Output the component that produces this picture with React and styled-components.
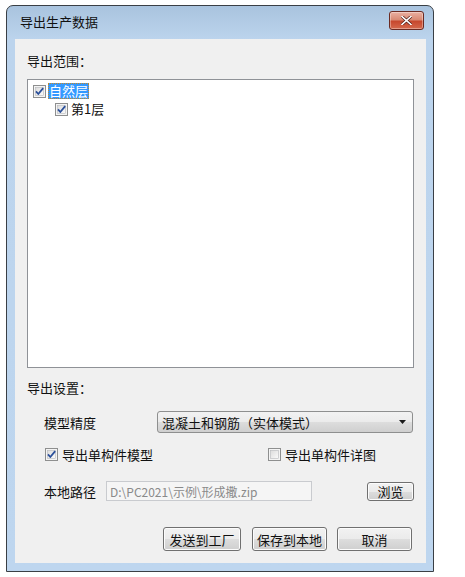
import React from 'react';
import styled, { createGlobalStyle } from 'styled-components';

const GlobalStyle = createGlobalStyle`
  body {
    margin: 0;
    background: #ffffff;
    font-family: "Noto Sans CJK SC", "Liberation Sans", sans-serif;
  }
`;

const Window = styled.div`
  box-sizing: border-box;
  width: 428px;
  height: 567px;
  margin: 5px 0 0 6px;
  border: 1px solid #3a3f45;
  border-radius: 7px 7px 0 0;
  background: linear-gradient(to bottom, #a9c3de 0px, #bcd4ed 34px, #bed6ef 100%);
  display: flex;
  flex-direction: column;
`;

const TitleBar = styled.div`
  height: 33px;
  display: flex;
  align-items: center;
  justify-content: space-between;
  padding: 0 9px 0 13px;
`;

const Title = styled.span`
  font-size: 13px;
  color: #111111;
  margin-top: -2px;
`;

const CloseButton = styled.div`
  box-sizing: border-box;
  width: 35px;
  height: 19px;
  margin-top: -5px;
  border: 1px solid #6b2a22;
  border-radius: 3px;
  background: linear-gradient(to bottom, #eab0a2 0%, #d98a74 45%, #c7482e 55%, #d5694d 100%);
  display: flex;
  align-items: center;
  justify-content: center;
  box-shadow: inset 0 0 0 1px rgba(255, 255, 255, 0.35);
`;

const Client = styled.div`
  flex: 1;
  margin: 0 7px 8px 8px;
  background: #f0f0f0;
  padding: 13px 12px 0 12px;
  display: flex;
  flex-direction: column;
  font-size: 13px;
  color: #111111;
`;

const SectionLabel = styled.div`
  height: 18px;
  line-height: 18px;
  margin-top: ${(p) => p.$top || 0}px;
`;

const TreeBox = styled.div`
  box-sizing: border-box;
  height: 289px;
  margin-top: 9px;
  background: #ffffff;
  border: 1px solid #8f9297;
  padding: 2px 0 0 5px;
`;

const TreeRow = styled.div`
  display: flex;
  align-items: center;
  height: 18px;
  padding-left: ${(p) => p.$indent || 0}px;
`;

const TreeText = styled.span`
  margin-left: 2px;
  padding: 0 1px;
  height: 16px;
  line-height: 15px;
  box-sizing: border-box;
  ${(p) =>
    p.$selected &&
    `
    background: #3399ff;
    color: #ffffff;
    outline: 1px dotted #c58a2a;
    outline-offset: -1px;
  `}
`;

const FormRow = styled.div`
  display: flex;
  align-items: center;
  height: ${(p) => p.$height || 18}px;
  margin-top: ${(p) => p.$top || 0}px;
  padding-left: ${(p) => p.$indent || 0}px;
`;

const FieldLabel = styled.span`
  width: ${(p) => p.$width}px;
  flex-shrink: 0;
`;

const Select = styled.div`
  box-sizing: border-box;
  width: 256px;
  height: 22px;
  border: 1px solid #8e8f8f;
  border-radius: 3px;
  background: linear-gradient(to bottom, #f2f2f2 0%, #ebebeb 50%, #dddddd 51%, #cfcfcf 100%);
  display: flex;
  align-items: center;
  justify-content: space-between;
  padding: 0 6px 0 4px;
`;

const CheckItem = styled.label`
  display: flex;
  align-items: center;
  width: ${(p) => p.$width || 'auto'};
`;

const CheckText = styled.span`
  margin-left: 4px;
`;

const PathInput = styled.div`
  box-sizing: border-box;
  width: 206px;
  height: 20px;
  border: 1px solid #c9cbcf;
  background: #f5f5f5;
  color: #8a8a8a;
  font-size: 12px;
  display: flex;
  align-items: center;
  padding-left: 3px;
`;

const Button = styled.div`
  box-sizing: border-box;
  width: ${(p) => p.$width}px;
  height: ${(p) => p.$height || 24}px;
  margin-left: ${(p) => p.$left || 0}px;
  border: 1px solid #707070;
  border-radius: 3px;
  background: linear-gradient(to bottom, #f2f2f2 0%, #ebebeb 50%, #dddddd 51%, #cfcfcf 100%);
  box-shadow: inset 0 0 0 1px #fcfcfc;
  display: flex;
  align-items: center;
  justify-content: center;
  font-size: 13px;
  color: #111111;
`;

const ButtonBar = styled.div`
  display: flex;
  justify-content: flex-end;
  margin-top: 26px;
  padding-right: 2px;
`;

const Spacer = styled.div`
  flex: 1;
`;

const CheckBox = ({ checked }) => (
  <svg width="13" height="13" viewBox="0 0 13 13">
    <defs>
      <linearGradient id="cbfill" x1="0" y1="0" x2="1" y2="1">
        <stop offset="0" stopColor="#dcdcdc" />
        <stop offset="1" stopColor="#fbfbfb" />
      </linearGradient>
    </defs>
    <rect x="0.5" y="0.5" width="12" height="12" fill="#f4f4f4" stroke="#8e8f8f" />
    <rect x="2.5" y="2.5" width="8" height="8" fill="url(#cbfill)" stroke="#b6b8bb" strokeWidth="0.6" />
    {checked && (
      <path d="M3 6.4 L5.3 9 L10.2 3.2" fill="none" stroke="#2a4f9a" strokeWidth="1.8" strokeLinejoin="round" />
    )}
  </svg>
);

const CloseIcon = () => (
  <svg width="11" height="9" viewBox="0 0 11 9">
    <path d="M1 0.5 L10 8.5 M10 0.5 L1 8.5" stroke="#4a1a14" strokeWidth="3" strokeLinecap="square" />
    <path d="M1 0.5 L10 8.5 M10 0.5 L1 8.5" stroke="#ffffff" strokeWidth="1.6" strokeLinecap="square" />
  </svg>
);

const DropArrow = () => (
  <svg width="7" height="4" viewBox="0 0 7 4">
    <path d="M0 0 L7 0 L3.5 4 Z" fill="#1b1b1b" />
  </svg>
);

const App = () => {
  return (
    <>
      <GlobalStyle />
      <Window>
        <TitleBar>
          <Title>导出生产数据</Title>
          <CloseButton>
            <CloseIcon />
          </CloseButton>
        </TitleBar>
        <Client>
          <SectionLabel>导出范围：</SectionLabel>
          <TreeBox>
            <TreeRow>
              <CheckBox checked />
              <TreeText $selected>自然层</TreeText>
            </TreeRow>
            <TreeRow $indent={22}>
              <CheckBox checked />
              <TreeText>第1层</TreeText>
            </TreeRow>
          </TreeBox>
          <SectionLabel $top={11}>导出设置：</SectionLabel>
          <FormRow $height={22} $top={14} $indent={17}>
            <FieldLabel $width={113}>模型精度</FieldLabel>
            <Select>
              <span>混凝土和钢筋（实体模式）</span>
              <DropArrow />
            </Select>
          </FormRow>
          <FormRow $top={12} $indent={18}>
            <CheckItem $width="223px">
              <CheckBox checked />
              <CheckText>导出单构件模型</CheckText>
            </CheckItem>
            <CheckItem>
              <CheckBox />
              <CheckText>导出单构件详图</CheckText>
            </CheckItem>
          </FormRow>
          <FormRow $height={20} $top={18} $indent={17}>
            <FieldLabel $width={62}>本地路径</FieldLabel>
            <PathInput>D:\PC2021\示例\形成撒.zip</PathInput>
            <Spacer />
            <Button $width={47} $height={19}>浏览</Button>
          </FormRow>
          <ButtonBar>
            <Button $width={78}>发送到工厂</Button>
            <Button $width={75} $left={11}>保存到本地</Button>
            <Button $width={75} $left={10}>取消</Button>
          </ButtonBar>
        </Client>
      </Window>
    </>
  );
};

export default App;
